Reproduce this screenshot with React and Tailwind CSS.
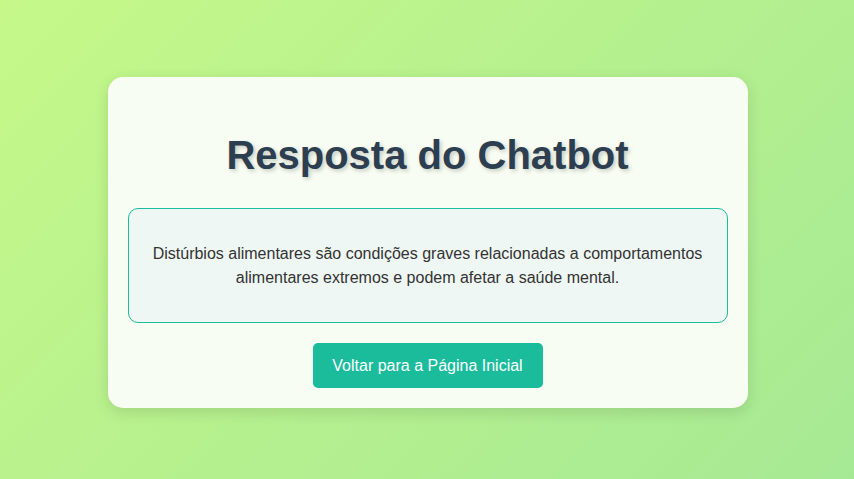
export default function App() {
  return (
    <div
      className="w-full h-[479px] flex justify-center pt-[77px] pl-[1px] bg-[linear-gradient(135deg,#c5f889_0%,#a6e994_100%)]"
      style={{ fontFamily: '"Liberation Sans", Arial, sans-serif' }}
    >
      <div className="w-[640px] h-[331px] bg-[#f7fdf2] rounded-[15px] shadow-[0_4px_15px_rgba(0,0,0,0.12)] px-[20px] pt-[55px] pb-[20px] flex flex-col items-center">
        <h1 className="text-[40px] leading-[46px] font-bold text-[#2c3e50] [text-shadow:2px_2px_4px_rgba(0,0,0,0.2)]">
          Resposta do Chatbot
        </h1>
        <div className="mt-[30px] w-[600px] h-[115px] border border-[#1abc9c] rounded-[10px] bg-[#eff7f4] flex items-center justify-center px-[20px]">
          <p className="text-[16px] leading-[24px] text-[#333333] text-center">
            Distúrbios alimentares são condições graves relacionadas a comportamentos
            alimentares extremos e podem afetar a saúde mental.
          </p>
        </div>
        <button className="mt-[20px] w-[230px] h-[45px] bg-[#1abc9c] rounded-[5px] text-white text-[16px]">
          Voltar para a Página Inicial
        </button>
      </div>
    </div>
  );
}
